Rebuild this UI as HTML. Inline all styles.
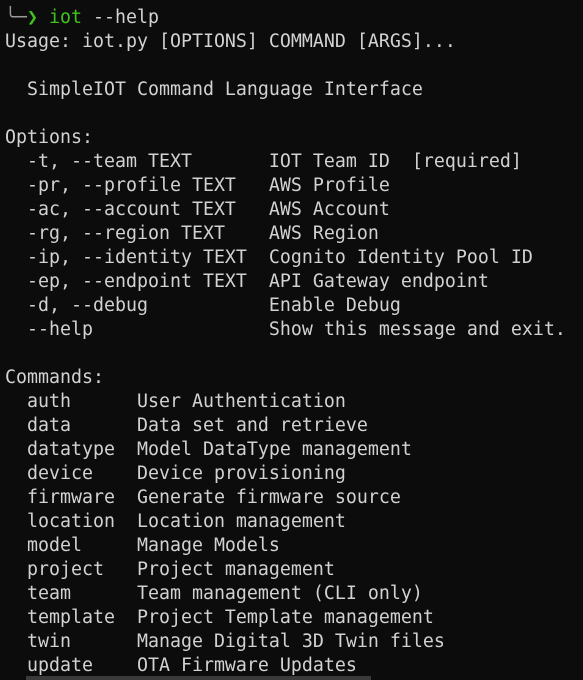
<!DOCTYPE html>
<html><head><meta charset="utf-8"><style>
html,body{margin:0;padding:0;background:#0c0c0c;width:583px;height:680px;overflow:hidden}
pre{margin:0;padding:6px 0 0 5px;font-family:"DejaVu Sans Mono","Liberation Mono",monospace;font-size:18.27px;line-height:24px;color:#d2d2d2}
.g{color:#3fc41c}.d{color:#9a9a9a}
.bar{position:absolute;left:26px;top:676px;width:345px;height:4px;background:#3a3a3a}
</style></head><body>
<pre><span class="d">╰─</span><span class="g">❯ iot</span> --help
Usage: iot.py [OPTIONS] COMMAND [ARGS]...

  SimpleIOT Command Language Interface

Options:
  -t, --team TEXT       IOT Team ID  [required]
  -pr, --profile TEXT   AWS Profile
  -ac, --account TEXT   AWS Account
  -rg, --region TEXT    AWS Region
  -ip, --identity TEXT  Cognito Identity Pool ID
  -ep, --endpoint TEXT  API Gateway endpoint
  -d, --debug           Enable Debug
  --help                Show this message and exit.

Commands:
  auth      User Authentication
  data      Data set and retrieve
  datatype  Model DataType management
  device    Device provisioning
  firmware  Generate firmware source
  location  Location management
  model     Manage Models
  project   Project management
  team      Team management (CLI only)
  template  Project Template management
  twin      Manage Digital 3D Twin files
  update    OTA Firmware Updates</pre>
<div class="bar"></div>
</body></html>
